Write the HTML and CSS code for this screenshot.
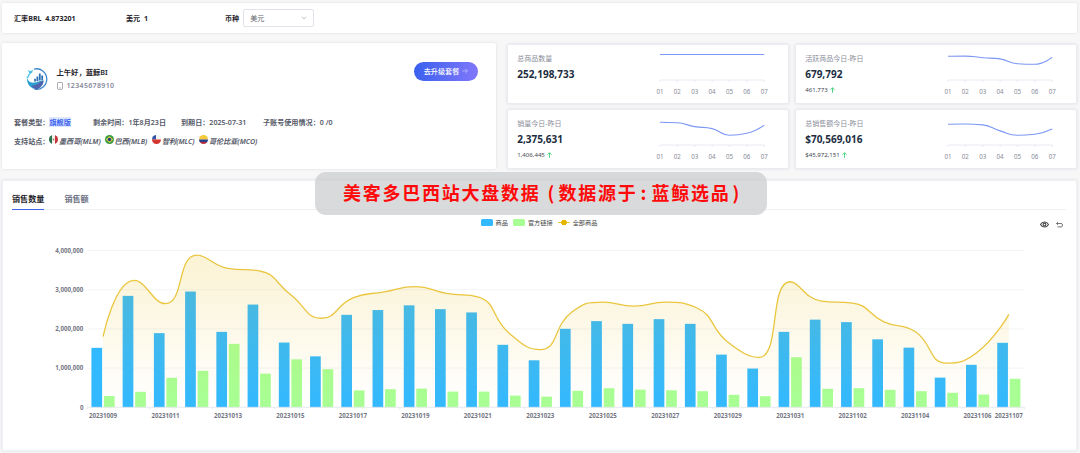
FILE: index.html
```html
<!DOCTYPE html>
<html lang="zh-CN">
<head>
    <meta charset="UTF-8">
    <meta name="viewport" content="width=device-width, initial-scale=1.0">
    <title>蓝鲸BI</title>
    <link rel="stylesheet" href="styles.css">
</head>
<body>
    <div class="rate-bar">
        <div class="rate rate-brl">汇率BRL&nbsp; 4.873201</div>
        <div class="rate rate-usd">美元&nbsp; 1</div>
        <div class="currency">
            <span>币种</span>
            <div class="select">
                <span>美元</span>
                <svg width="6" height="4" viewBox="0 0 6 4"><path d="M0.7 0.7L3 3L5.3 0.7" fill="none" stroke="#b4b7bf" stroke-width="0.8"/></svg>
            </div>
        </div>
    </div>

    <div class="overview">
        <div class="account">
            <div class="account-head">
                <svg class="logo" width="23" height="24" viewBox="0 0 23 24">
                    <path d="M8 2.1A10.3 10.3 0 1 1 8.5 22.2" fill="none" stroke="#3f86cc" stroke-width="1.3"/>
                    <path d="M0.8 9.5C1.2 13.5 4 16 8 15.6C12 15.2 13.5 13.4 17.5 13.4C17.5 18 14 21.5 10 22.2C5 21.8 0.4 17.5 0.8 9.5Z" fill="#2a9fd0"/>
                    <path d="M5.5 18.5C10 18.6 13 15 17.5 13.4C17.5 18 14 21.5 10 22.2C8 21.6 6.4 20 5.5 18.5Z" fill="#5264ae"/>
                    <path d="M2 3L4.6 4.2L7 2.6L6.2 5.4L3.6 7.4L3 5.4Z" fill="#45bfe3"/>
                    <path d="M3.4 7L1.4 11" stroke="#45bfe3" stroke-width="1.4"/>
                    <path d="M9 14.5V11.8M11.4 14.2V9.4M13.8 13.6V6.6M16.2 13.2V8.6" stroke="#2f70b4" stroke-width="1.8"/>
                </svg>
                <div class="user">
                    <div class="user-name">上午好，蓝鲸BI</div>
                    <div class="user-phone">
                        <svg width="6" height="8" viewBox="0 0 6 8"><rect x="0.5" y="0.5" width="5" height="6.8" rx="0.6" fill="none" stroke="#93969f" stroke-width="0.8"/><path d="M2.3 5.9H3.7" stroke="#93969f" stroke-width="0.8"/></svg>
                        <span>12345678910</span>
                    </div>
                </div>
                <button class="btn-upgrade">去升级套餐
                    <svg width="6" height="6" viewBox="0 0 6 6"><path d="M0.2 3H5.4M3.2 0.7L5.5 3L3.2 5.3" fill="none" stroke="#d5d3ff" stroke-width="0.6"/></svg>
                </button>
            </div>
            <div class="plan">
                <div class="plan-type">套餐类型：<span class="plan-name">旗舰版</span></div>
                <div class="plan-left">剩余时间：1年8月23日</div>
                <div class="plan-end">到期日：2025-07-31</div>
                <div class="plan-sub">子账号使用情况：0 /0</div>
            </div>
            <div class="sites">
                <span class="sites-label">支持站点：</span>
                <span class="site site-mx">
                    <svg width="9" height="9" viewBox="0 0 9 9"><clipPath id="c1"><circle cx="4.5" cy="4.5" r="4.5"/></clipPath><g clip-path="url(#c1)"><path fill="#f3f3f0" d="M0 0H9V9H0Z"/><path fill="#28714d" d="M0 0H3V9H0Z"/><path fill="#c8303a" d="M6 0H9V9H6Z"/><circle cx="4.5" cy="4.5" r="0.9" fill="#9b8562"/></g></svg>
                    <i>墨西哥(MLM)</i>
                </span>
                <span class="site site-br">
                    <svg width="9" height="9" viewBox="0 0 9 9"><circle cx="4.5" cy="4.5" r="4.5" fill="#3b9b42"/><path d="M0.9 4.5L4.5 1.3L8.1 4.5L4.5 7.7Z" fill="#f1d944"/><circle cx="4.5" cy="4.5" r="1.8" fill="#24418c"/></svg>
                    <i>巴西(MLB)</i>
                </span>
                <span class="site site-cl">
                    <svg width="9" height="9" viewBox="0 0 9 9"><g clip-path="url(#c1)"><path fill="#f5f5f7" d="M0 0H9V4.5H0Z"/><path fill="#3053a5" d="M0 0H4V4.5H0Z"/><path fill="#d63430" d="M0 4.5H9V9H0Z"/></g></svg>
                    <i>智利(MLC)</i>
                </span>
                <span class="site site-co">
                    <svg width="9" height="9" viewBox="0 0 9 9"><g clip-path="url(#c1)"><path fill="#f5c93a" d="M0 0H9V4.5H0Z"/><path fill="#273f87" d="M0 4.5H9V6.9H0Z"/><path fill="#b92f3e" d="M0 6.9H9V9H0Z"/></g></svg>
                    <i>哥伦比亚(MCO)</i>
                </span>
            </div>
        </div>

        <div class="stats">
            <div class="stat">
                <div class="stat-text">
                    <div class="stat-label">总商品数量</div>
                    <div class="stat-value">252,198,733</div>
                </div>
                <svg class="spark" width="124" height="54" data-line="9.5,9.5,9.5,9.5,9.5,9.5,9.5"></svg>
            </div>
            <div class="stat">
                <div class="stat-text">
                    <div class="stat-label">活跃商品今日-昨日</div>
                    <div class="stat-value">679,792</div>
                    <div class="stat-diff">461,773 <svg width="5" height="6" viewBox="0 0 5 6"><path d="M2.5 5.8V0.8M0.4 2.8L2.5 0.7L4.6 2.8" fill="none" stroke="#3fcf7a" stroke-width="0.9"/></svg></div>
                </div>
                <svg class="spark" width="124" height="54" data-line="11.2,11.1,12.7,13.9,18.7,19.3,12.2"></svg>
            </div>
            <div class="stat">
                <div class="stat-text">
                    <div class="stat-label">销量今日-昨日</div>
                    <div class="stat-value">2,375,631</div>
                    <div class="stat-diff">1,406,445 <svg width="5" height="6" viewBox="0 0 5 6"><path d="M2.5 5.8V0.8M0.4 2.8L2.5 0.7L4.6 2.8" fill="none" stroke="#3fcf7a" stroke-width="0.9"/></svg></div>
                </div>
                <svg class="spark" width="124" height="54" data-line="12.3,12.8,16.6,18.6,25.2,23.2,15.1"></svg>
            </div>
            <div class="stat">
                <div class="stat-text">
                    <div class="stat-label">总销售额今日-昨日</div>
                    <div class="stat-value">$70,569,016</div>
                    <div class="stat-diff">$45,972,151 <svg width="5" height="6" viewBox="0 0 5 6"><path d="M2.5 5.8V0.8M0.4 2.8L2.5 0.7L4.6 2.8" fill="none" stroke="#3fcf7a" stroke-width="0.9"/></svg></div>
                </div>
                <svg class="spark" width="124" height="54" data-line="14.3,14,14.9,20.9,25.3,24.3,19.1"></svg>
            </div>
        </div>
    </div>

    <div class="market">
        <div class="tabs">
            <div class="tab active">销售数量</div>
            <div class="tab">销售额</div>
        </div>
        <div class="chart-head">
            <div class="legend">
                <span class="key key-goods"></span><span class="key-text">商品</span>
                <span class="key key-link"></span><span class="key-text">官方链接</span>
                <span class="key key-total"></span><span class="key-text">全部商品</span>
            </div>
            <div class="toolbox">
                <svg width="9" height="7" viewBox="0 0 9 7"><path d="M0.5 3.5C2.3 0.2 6.7 0.2 8.5 3.5C6.7 6.8 2.3 6.8 0.5 3.5Z" fill="none" stroke="#4a4a4a" stroke-width="1.1"/><circle cx="4.5" cy="3.5" r="1.4" fill="none" stroke="#4a4a4a" stroke-width="1.1"/></svg>
                <svg width="7" height="6" viewBox="0 0 7 6"><path d="M2 0.2L0.5 1.5L2 2.8M0.6 1.5H5.2Q6.5 1.5 6.5 3.1Q6.5 4.9 5.2 4.9H1.5" fill="none" stroke="#666" stroke-width="0.9"/></svg>
            </div>
        </div>
        <svg class="chart" width="1072" height="190"></svg>
        <div class="banner"><span>美客多巴西站大盘数据</span><span class="paren open">(</span><span>数据源于</span><span class="paren colon">:</span><span>蓝鲸选品</span><span class="paren close">)</span></div>
    </div>

    <script src="chart.js"></script>
</body>
</html>
```

FILE: styles.css
```css
* {
    margin: 0;
    padding: 0;
    box-sizing: border-box;
}

body {
    height: 453px;
    padding: 3px 3px 0 2px;
    background-color: #f7f7f8;
    font-family: "Noto Sans", "Noto Sans CJK SC", sans-serif;
    font-size: 7px;
    line-height: 10px;
    color: #1f2329;
    overflow: hidden;
}

svg {
    display: block;
}

.rate-bar,
.account,
.stat,
.market {
    background-color: white;
    border-radius: 2px;
    box-shadow: 0 0 3px rgba(40, 45, 70, 0.12);
}

.rate-bar {
    height: 30px;
    display: flex;
    align-items: center;
    padding-left: 12px;
    font-size: 7.1px;
    font-weight: 700;
}

.rate-brl {
    width: 112px;
}

.rate-usd {
    width: 99px;
}

.currency {
    display: flex;
    align-items: center;
    gap: 4px;
}

.select {
    width: 71px;
    height: 18px;
    display: flex;
    align-items: center;
    justify-content: space-between;
    padding: 0 6px;
    border: 1px solid #e1e3ea;
    border-radius: 2px;
    font-weight: 400;
    color: #60636b;
}

.overview {
    display: flex;
    gap: 11px;
    margin-top: 10px;
    height: 126px;
}

.account {
    width: 494px;
    padding: 18px 18px 0 12px;
}

.account-head {
    display: flex;
    padding-left: 12px;
    height: 56px;
}

.logo {
    margin-top: 6px;
}

.user {
    margin: 6px 0 0 7.5px;
}

.user-name {
    font-weight: 600;
    font-size: 7.3px;
}

.user-phone {
    display: flex;
    align-items: center;
    gap: 4px;
    margin-top: 4px;
    color: #85889a;
    font-weight: 600;
    letter-spacing: 0.35px;
}

.btn-upgrade {
    display: flex;
    align-items: center;
    justify-content: center;
    gap: 3px;
    width: 64px;
    height: 19px;
    margin: 1px 0 0 auto;
    padding-bottom: 1px;
    border: none;
    border-radius: 10px;
    background: linear-gradient(100deg, #3860ee, #8278fb);
    color: white;
    font-family: inherit;
    font-size: 7.1px;
    font-weight: 500;
}

.plan {
    display: flex;
    color: #555968;
    font-weight: 600;
    font-size: 7.1px;
    white-space: nowrap;
}

.plan-type {
    width: 79px;
}

.plan-left {
    width: 88px;
}

.plan-end {
    width: 82px;
}

.plan-name {
    background-color: #dfe7fe;
    color: #3c64f0;
    font-weight: 600;
}

.sites {
    display: flex;
    align-items: center;
    margin-top: 9px;
    font-size: 7.1px;
    font-weight: 600;
    color: #555968;
    white-space: nowrap;
}

.sites-label {
    width: 35px;
}

.site {
    display: flex;
    gap: 1px;
}

.site svg {
    margin-top: -1px;
}

.site-mx {
    width: 55.5px;
}

.site-br {
    width: 47.5px;
}

.site-cl {
    width: 47px;
}

.stats {
    flex: 1;
    display: grid;
    grid-template-columns: 281.5px 281.5px;
    grid-template-rows: 60px 60px;
    gap: 5.5px 6.5px;
    padding-top: 0.5px;
}

.stat {
    display: flex;
    justify-content: space-between;
    padding: 0 16.2px 0 9.2px;
    border: 1px solid #ebecf1;
}

.stat-text {
    padding-top: 9px;
    white-space: nowrap;
}

.stat-label {
    color: #8a8d99;
}

.stat-value {
    margin-top: 4px;
    font-size: 10px;
    line-height: 13px;
    font-weight: 700;
    color: #202d40;
}

.stat-diff {
    display: flex;
    align-items: center;
    gap: 2px;
    margin-top: 4px;
    font-size: 6.1px;
    color: #444852;
}

.spark-line {
    fill: none;
    stroke: #7d98f5;
    stroke-width: 1.1;
}

.spark-axis {
    fill: none;
    stroke: #e0e3ef;
    stroke-width: 0.7;
}

.spark-label {
    font-size: 6.2px;
    fill: #888b97;
    text-anchor: middle;
}

.market {
    position: relative;
    height: 271px;
    margin-top: 10.5px;
    padding: 0 10px 0 9px;
    border: 1px solid #f0f1f4;
}

.tabs {
    display: flex;
    gap: 20px;
    height: 29.5px;
    border-bottom: 1px solid #eff0f3;
    font-size: 8.1px;
}

.tab {
    height: 29px;
    padding-top: 13.5px;
    font-weight: 600;
    color: #6b7082;
}

.tab.active {
    border-bottom: 1px solid #3d64ea;
    color: #1f2329;
}

.chart-head {
    display: flex;
    align-items: center;
    height: 29px;
}

.legend {
    display: flex;
    align-items: center;
    flex: 1;
    padding: 0 0 4px 468.5px;
    font-size: 6.2px;
    color: #444;
}

.key {
    width: 12.5px;
    height: 7px;
    margin-right: 2.5px;
    border-radius: 1.5px;
}

.key-text {
    margin-right: 5px;
}

.key-goods {
    background-color: #33b9ff;
}

.key-link {
    background-color: #a8ff94;
}

.key-total {
    background: radial-gradient(circle, #e6b600 2.6px, transparent 3.1px), linear-gradient(#edc944, #edc944) center / 100% 1px no-repeat;
}

.toolbox {
    display: flex;
    align-items: center;
    gap: 7px;
    padding-right: 3px;
}

.chart {
    margin-left: -9px;
}

.grid-line {
    stroke: #f3f4f6;
    stroke-width: 1;
}

.axis-line {
    fill: none;
    stroke: #e3e5ec;
    stroke-width: 0.8;
}

.bar-goods {
    fill: #33b9ff;
}

.bar-link {
    fill: #a8ff94;
}

.total-line {
    fill: none;
    stroke: #eac63f;
    stroke-width: 1.3;
}

.axis-label {
    font-size: 6.15px;
    font-weight: 700;
    fill: #747683;
}

.label-x {
    text-anchor: middle;
}

.label-y {
    text-anchor: end;
}

/* Lies over the gap between the cards and the tabs */
.banner {
    position: absolute;
    top: -8.5px;
    left: 312px;
    width: 452px;
    height: 42.5px;
    display: flex;
    padding-left: 28px;
    border-radius: 11px;
    background-color: rgba(201, 202, 204, 0.7);
    color: #ff0a0a;
    font-family: "Noto Sans CJK SC", sans-serif;
    font-size: 18px;
    line-height: 41px;
    font-weight: 700;
    letter-spacing: 1.75px;
    white-space: nowrap;
}

.paren {
    letter-spacing: 0;
}

.open {
    width: 18px;
    padding-left: 7px;
}

.colon {
    width: 14px;
    padding-left: 3px;
}

.close {
    padding-left: 2px;
}
```

FILE: chart.js
```js
// Sales per day, in thousands
const goods = [1517, 2843, 1892, 2953, 1925, 2621, 1652, 1300, 2359, 2481, 2601, 2504, 2420, 1594, 1199,
    2002, 2198, 2129, 2249, 2129, 1344, 989, 1925, 2236, 2173, 1734, 1522, 757, 1084, 1645];
const links = [286, 395, 752, 931, 1619, 859, 1224, 972, 431, 462, 477, 400, 400, 298, 273,
    421, 487, 451, 434, 411, 319, 283, 1278, 472, 487, 446, 411, 370, 326, 727];

function clamp(v, a, b) {
    return Math.max(Math.min(a, b), Math.min(Math.max(a, b), v));
}

// Smooth curve through the points, never passing beyond its neighbours
function smoothPath(pts) {
    let d = `M${pts[0][0]} ${pts[0][1]}`;
    let cp = pts[0];
    for (let i = 1; i < pts.length; i++) {
        const p = pts[i];
        const prev = pts[i - 1];
        const next = pts[i + 1];
        let before = p;
        let after = p;
        if (next) {
            const lenPrev = Math.hypot(p[0] - prev[0], p[1] - prev[1]);
            const lenNext = Math.hypot(next[0] - p[0], next[1] - p[1]);
            const ratio = lenNext / (lenNext + lenPrev);
            after = [0, 1].map(k => clamp(p[k] + (next[k] - prev[k]) * 0.5 * ratio, p[k], next[k]));
            before = [0, 1].map(k => clamp(p[k] - (after[k] - p[k]) * lenPrev / lenNext, prev[k], p[k]));
            after = [0, 1].map(k => p[k] + (p[k] - before[k]) * lenNext / lenPrev);
        }
        d += `C${cp[0]} ${cp[1]} ${before[0]} ${before[1]} ${p[0]} ${p[1]}`;
        cp = after;
    }
    return d;
}

// Small line charts
document.querySelectorAll('.spark').forEach(svg => {
    const left = 13;
    const step = 17.37;
    const pts = svg.dataset.line.split(',').map((y, i) => [left + i * step, Number(y)]);
    let out = `<path class="spark-axis" d="M${left} 35H${left + step * 6}`;
    pts.forEach(p => out += `M${p[0]} 35v2`);
    out += '"/>';
    pts.forEach((p, i) => out += `<text class="spark-label" x="${p[0]}" y="49.3">0${i + 1}</text>`);
    svg.innerHTML = out + `<path class="spark-line" d="${smoothPath(pts)}"/>`;
});

// Main chart
const x0 = 84.4;
const band = 31.235;
const y0 = 168.3;
const unit = 39.2;
const right = x0 + band * goods.length;
const yOf = v => y0 - v / 1000 * unit;

let html = '<defs><linearGradient id="area" x1="0" y1="0" x2="0" y2="1"><stop offset="0" stop-color="#e6b600" stop-opacity="0.17"/><stop offset="1" stop-color="#e6b600" stop-opacity="0"/></linearGradient></defs>';

['0', '1,000,000', '2,000,000', '3,000,000', '4,000,000'].forEach((label, i) => {
    const y = yOf(i * 1000);
    if (i) html += `<path class="grid-line" d="M${x0} ${y}H${right}"/>`;
    html += `<text class="axis-label label-y" x="${x0 - 4}" y="${y + 2.2}">${label}</text>`;
});

goods.forEach((v, i) => {
    const c = x0 + band * (i + 0.5);
    html += `<rect class="bar-goods" x="${c - 11.6}" y="${yOf(v)}" width="10.7" height="${y0 - yOf(v)}"/>`;
    html += `<rect class="bar-link" x="${c + 0.9}" y="${yOf(links[i])}" width="10.7" height="${y0 - yOf(links[i])}"/>`;
});

const total = goods.map((v, i) => [x0 + band * (i + 0.5), yOf(v + links[i])]);
const curve = smoothPath(total);
html += `<path fill="url(#area)" d="${curve}L${total[29][0]} ${y0}H${total[0][0]}Z"/>`;
html += `<path class="total-line" d="${curve}"/>`;

let axis = `M${x0} ${y0}H${right}v2`;
goods.forEach((v, i) => {
    if (i % 2 && i !== 29) return;
    axis += `M${x0 + band * i} ${y0}v2`;
    const date = i < 23 ? 20231009 + i : 20231101 + i - 23;
    html += `<text class="axis-label label-x" x="${x0 + band * (i + 0.5)}" y="${y0 + 10.2}">${date}</text>`;
});
document.querySelector('.chart').innerHTML = html + `<path class="axis-line" d="${axis}"/>`;
```
